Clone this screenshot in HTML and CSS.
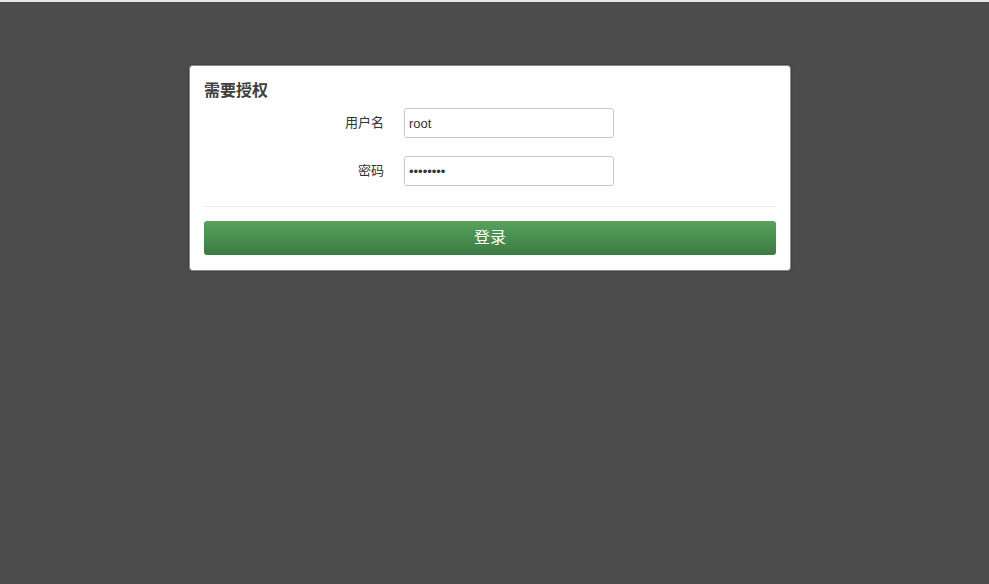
FILE: index.html
```html
<!DOCTYPE html>
<html lang="zh">
<head>
<meta charset="utf-8">
<title>需要授权</title>
<link rel="stylesheet" href="styles.css">
</head>
<body>
<div class="topline"></div>
<main class="page">
  <form class="card">
    <h2 class="title">需要授权</h2>
    <div class="row">
      <label class="label">用户名</label>
      <input class="field" type="text" value="root">
    </div>
    <div class="row">
      <label class="label">密码</label>
      <input class="field" type="password" value="password">
    </div>
    <hr class="sep">
    <button class="btn" type="button">登录</button>
  </form>
</main>
</body>
</html>
```
FILE: styles.css
```css
html, body {
  margin: 0;
  padding: 0;
  height: 100%;
  background: #4c4c4c;
  font-family: "Liberation Sans", Arial, "Noto Sans CJK SC", sans-serif;
}
.topline {
  height: 2px;
  background: #e6e6e6;
}
.page {
  padding: 64px 0 0 190px;
}
.card {
  box-sizing: border-box;
  width: 600px;
  background: #fff;
  border-radius: 3px;
  box-shadow: 0 0 0 1px rgba(200,200,200,0.55), 0 0 3px 1px rgba(0,0,0,0.25);
  padding: 12px 14px 15px 14px;
  display: flex;
  flex-direction: column;
}
.title {
  margin: 0 0 8px 0;
  font-family: "Noto Sans CJK SC", sans-serif;
  font-size: 16px;
  line-height: 22px;
  font-weight: bold;
  color: #404040;
}
.row {
  display: flex;
  align-items: center;
  gap: 20px;
  margin-bottom: 18px;
}
.row + .row { margin-bottom: 0; }
.label {
  width: 180px;
  text-align: right;
  font-family: "Noto Sans CJK SC", sans-serif;
  font-size: 13px;
  line-height: 16px;
  padding-bottom: 2px;
  color: #333;
}
.field {
  box-sizing: border-box;
  width: 210px;
  height: 30px;
  border: 1px solid #c8c8c8;
  border-radius: 3px;
  padding: 0 4px;
  font-family: "Liberation Sans", Arial, sans-serif;
  font-size: 13px;
  color: #333;
  outline: none;
  margin: 0;
}
.sep {
  border: 0;
  border-top: 1px solid #eaeaea;
  margin: 20px 0 14px 0;
  height: 0;
}
.btn {
  height: 34px;
  border: 0;
  border-radius: 3px;
  background: linear-gradient(#57a25c, #3c7a43);
  color: #fff;
  font-family: "Noto Sans CJK SC", sans-serif;
  font-size: 16px;
  line-height: 30px;
  padding: 0 0 4px 0;
  cursor: pointer;
}
```
